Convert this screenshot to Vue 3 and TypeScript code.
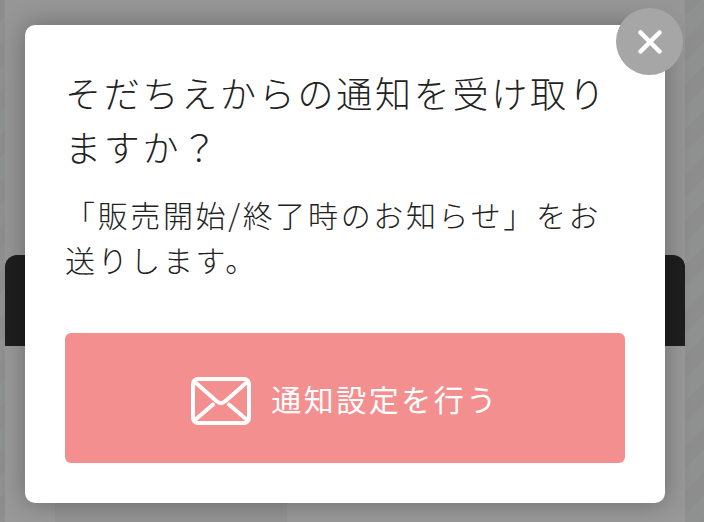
<script setup lang="ts">
const title = 'そだちえからの通知を受け取りますか？'
const body = '「販売開始/終了時のお知らせ」をお送りします。'
const action = '通知設定を行う'
</script>

<template>
  <div class="page">
    <div class="backdrop">
      <div class="column">
        <div class="top-card"></div>
        <div class="dark-card"></div>
        <div class="lower">
          <div class="lower-left"></div>
          <div class="lower-mid"></div>
        </div>
      </div>
    </div>
    <div class="scrim"></div>
    <div class="modal">
      <h2 class="title">{{ title }}</h2>
      <p class="body">{{ body }}</p>
      <button class="action" type="button">
        <svg class="mail" viewBox="0 0 60 48" width="60" height="48" fill="none" stroke="#fff" stroke-width="4" stroke-linecap="round" stroke-linejoin="round">
          <rect x="2" y="2" width="56" height="44" rx="5" />
          <path d="M5 6 L26 24.5 Q30 27.5 34 24.5 L55 6" />
          <path d="M4.500 42.500 L22 27.500 M55.500 42.500 L38 27.500" />
        </svg>
        <span>{{ action }}</span>
      </button>
      <button class="close" type="button" aria-label="閉じる">
        <svg viewBox="0 0 24 24" width="24" height="24" fill="none" stroke="#fff" stroke-width="4.500" stroke-linecap="round">
          <path d="M2.500 2.500 L21.500 21.500 M21.500 2.500 L2.500 21.500" />
        </svg>
      </button>
    </div>
  </div>
</template>

<style>
html, body { margin: 0; padding: 0; }
</style>

<style scoped>
.page {
  position: relative;
  width: 704px;
  height: 522px;
  overflow: hidden;
  font-family: "Noto Sans CJK JP", "Noto Sans", sans-serif;
}
.backdrop {
  height: 100%;
  padding: 0 19px 0 5px;
  box-sizing: border-box;
  background: repeating-linear-gradient(135deg, #e9ecea 0 16px, #eef1f0 16px 32px);
}
.column {
  height: 100%;
  background: #f9f9f9;
  display: flex;
  flex-direction: column;
}
.top-card {
  height: 80px;
  flex: none;
  background: #fbfbfb;
  border-radius: 0 0 10px 10px;
  margin-bottom: 175px;
}
.dark-card {
  height: 91px;
  flex: none;
  background: #323232;
  border-radius: 12px 12px 0 0;
}
.lower {
  flex: 1;
  display: flex;
  background: #fdfdfd;
}
.lower-left { width: 50px; }
.lower-mid { width: 232px; background: #f5f5f5; }
.scrim {
  position: absolute;
  inset: 0;
  background: rgba(0, 0, 0, 0.4);
}
.modal {
  position: absolute;
  left: 25px;
  top: 25px;
  width: 640px;
  height: 478px;
  box-sizing: border-box;
  padding: 40px;
  background: #fff;
  border-radius: 10px;
  box-shadow: 0 0 24px rgba(0, 0, 0, 0.3);
  display: flex;
  flex-direction: column;
  color: #222;
}
.title {
  margin: 0;
  font-size: 36px;
  font-weight: 300;
  line-height: 54px;
  letter-spacing: 2.750px;
}
.body {
  margin: 19px 0 0;
  font-size: 30px;
  font-weight: 300;
  line-height: 45px;
  letter-spacing: 2.650px;
}
.action {
  margin: auto 0 0;
  height: 130px;
  width: 560px;
  flex: none;
  border: 0;
  border-radius: 6px;
  background: #f48f8f;
  color: #fff;
  font: inherit;
  font-size: 30px;
  font-weight: 400;
  letter-spacing: 2.500px;
  display: flex;
  align-items: center;
  justify-content: center;
  gap: 20px;
}
.mail {
  flex: none;
  margin-top: 6px;
}
.close {
  position: absolute;
  right: -18px;
  top: -17px;
  width: 67px;
  height: 67px;
  padding: 0;
  border: 0;
  border-radius: 50%;
  background: #a6a6a6;
  display: flex;
  align-items: center;
  justify-content: center;
}
</style>
